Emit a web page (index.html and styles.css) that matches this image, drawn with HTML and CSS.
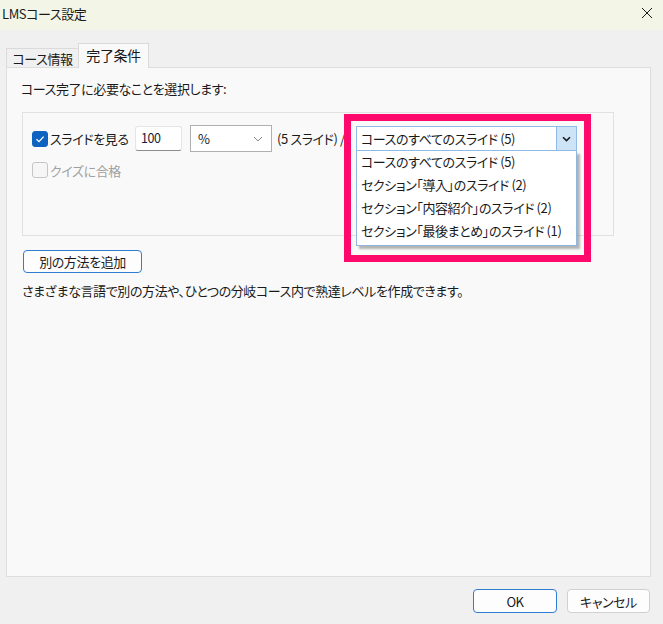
FILE: index.html
```html
<!DOCTYPE html>
<html lang="ja">
<head>
<meta charset="utf-8">
<title>LMSコース設定</title>
<link rel="stylesheet" href="styles.css">
</head>
<body>
<div class="window">
  <div class="titlebar">
    <span class="title">LMSコース設定</span>
    <svg class="close" width="12" height="12" viewBox="0 0 12 12"><path d="M1 1L11 11M11 1L1 11" stroke="#1a1a1a" stroke-width="1"/></svg>
  </div>
  <div class="main">
    <div class="tabs">
      <div class="tab">コース情報</div>
      <div class="tab active">完了条件</div>
    </div>
    <div class="panel">
      <div class="prompt">コース完了に必要なことを選択します:</div>
      <div class="group">
        <div class="row">
          <label class="check">
            <span class="box checked"><svg width="10" height="10" viewBox="0 0 10 10"><path d="M1.5 5.2L4 7.6L8.6 2.6" fill="none" stroke="#fff" stroke-width="1.3"/></svg></span>
            <span>スライドを見る</span>
          </label>
          <div class="num">100</div>
          <div class="select"><span>%</span><svg width="10" height="6" viewBox="0 0 10 6"><path d="M1 1L5 5L9 1" fill="none" stroke="#8a8a8a" stroke-width="1"/></svg></div>
          <span class="count">(5 スライド) /</span>
          <div class="combo">
            <div class="combo-field">
              <span class="combo-text">コースのすべてのスライド (5)</span>
              <span class="combo-btn"><svg width="9" height="6" viewBox="0 0 9 6"><path d="M1 1.2L4.5 4.6L8 1.2" fill="none" stroke="#1a1a1a" stroke-width="1.6"/></svg></span>
            </div>
            <ul class="combo-list">
              <li>コースのすべてのスライド (5)</li>
              <li>セクション「導入」のスライド (2)</li>
              <li>セクション「内容紹介」のスライド (2)</li>
              <li>セクション「最後まとめ」のスライド (1)</li>
            </ul>
            <div class="highlight"></div>
          </div>
        </div>
        <div class="row second">
          <label class="check disabled">
            <span class="box"></span>
            <span>クイズに合格</span>
          </label>
        </div>
      </div>
      <button class="btn add">別の方法を追加</button>
      <p class="desc">さまざまな言語で別の方法や、ひとつの分岐コース内で熟達レベルを作成できます。</p>
    </div>
    <div class="footer">
      <button class="btn primary">OK</button>
      <button class="btn">キャンセル</button>
    </div>
  </div>
</div>
</body>
</html>
```
FILE: styles.css
```css
* { box-sizing: border-box; }
html, body { margin: 0; padding: 0; }
body {
  background: #f0f0f0;
  font-family: "Noto Sans CJK JP", "Noto Sans", sans-serif;
  font-size: 13px;
  font-feature-settings: "palt";
  letter-spacing: -0.4px;
  color: #1a1a1a;
}
.window {
  width: 663px;
  height: 624px;
  display: flex;
  flex-direction: column;
}
.titlebar {
  height: 30px;
  background: #f3f5e7;
  display: flex;
  align-items: center;
  justify-content: space-between;
  padding: 0 10px 4px 2px;
}
.title { font-size: 13px; }
.main {
  flex: 1;
  display: flex;
  flex-direction: column;
  padding: 13px 12px 0 6px;
}
.tabs {
  display: flex;
  align-items: flex-end;
  height: 24px;
  position: relative;
  z-index: 1;
}
.tab {
  height: 19px;
  width: 73px;
  border: 1px solid #dadada;
  border-bottom: none;
  background: #f0f0f0;
  display: flex;
  align-items: center;
  justify-content: center;
  line-height: 1;
}
.tab.active {
  height: 25px;
  width: 71px;
  margin-left: -1px;
  background: #f9f9f9;
  margin-bottom: -1px;
  font-size: 14px;
  padding-bottom: 3px;
}
.panel {
  flex: 1;
  background: #f9f9f9;
  border: 1px solid #dedede;
  padding: 12px 0 0 15px;
}
.prompt { line-height: 18px; margin-left: -1px; }
.group {
  margin-top: 14px;
  width: 592px;
  height: 124px;
  border: 1px solid #e1e1e1;
  background: #f9f9f9;
  padding: 12px 0 0 9px;
}
.row {
  display: flex;
  align-items: center;
  height: 27px;
}
.row.second { margin-top: 7px; height: 22px; }
.check {
  display: flex;
  align-items: center;
  width: 103px;
  gap: 2px;
  line-height: 1;
}
.box {
  width: 16px;
  height: 16px;
  border-radius: 3px;
  border: 1px solid #c6c6c6;
  background: #f6f6f6;
  display: flex;
  align-items: center;
  justify-content: center;
}
.box.checked { background: #0f63c0; border-color: #0f63c0; }
.check.disabled { color: #a0a0a0; }
.num {
  width: 47px;
  height: 25px;
  background: #fff;
  border: 1px solid #e6e6e6;
  border-bottom-color: #8c8c8c;
  border-radius: 3px;
  padding: 1px 0 0 5px;
  line-height: 20px;
  color: #1b1b3a;
  font-size: 12.5px;
}
.select {
  margin-left: 8px;
  width: 82px;
  height: 27px;
  background: #fff;
  border: 1px solid #b0b0b0;
  display: flex;
  align-items: center;
  justify-content: space-between;
  padding: 0 8px 0 7px;
}
.count { width: 79px; margin-left: 5px; line-height: 1; white-space: nowrap; }
.combo { position: relative; width: 221px; height: 25px; align-self: flex-start; margin-top: 1px; }
.combo-field {
  height: 25px;
  background: #fff;
  border: 1px solid #8fbbe6;
  display: flex;
  align-items: stretch;
}
.combo-text { flex: 1; padding-left: 4px; line-height: 23px; white-space: nowrap; }
.combo-btn {
  width: 20px;
  background: #cde4f7;
  border-left: 1px solid #8fbbe6;
  display: flex;
  align-items: center;
  justify-content: center;
}
.combo-list {
  position: absolute;
  left: 0;
  top: 25px;
  width: 221px;
  margin: 0;
  padding: 0 0 2px;
  list-style: none;
  background: #fff;
  border: 1px solid #8fb5db;
  border-top: none;
  box-shadow: 3px 3px 2px rgba(0, 0, 0, 0.28);
  z-index: 2;
}
.combo-list li { height: 23px; line-height: 22px; padding-left: 4px; white-space: nowrap; }
.highlight {
  position: absolute;
  left: -12px;
  top: -12px;
  width: 247px;
  height: 148px;
  border: 7px solid #ff0a6c;
  z-index: 3;
  pointer-events: none;
}
.btn {
  font-family: inherit;
  font-size: 13px;
  font-feature-settings: "palt";
  letter-spacing: -0.4px;
  color: #1a1a1a;
  background: #fdfdfd;
  border: 1px solid #d0d0d0;
  border-radius: 4px;
  height: 24px;
  padding: 0;
  line-height: 1;
}
.btn.add {
  display: block;
  margin: 14px 0 0 1px;
  width: 119px;
  height: 23px;
  border-color: #2f7cd0;
}
.desc { margin: 9px 0 0; line-height: 18px; }
.footer {
  display: flex;
  justify-content: flex-end;
  gap: 10px;
  padding: 12px 1px 11px 0;
}
.footer .btn { width: 83px; }
.btn.primary { border-color: #2f7cd0; width: 84px; }
```
